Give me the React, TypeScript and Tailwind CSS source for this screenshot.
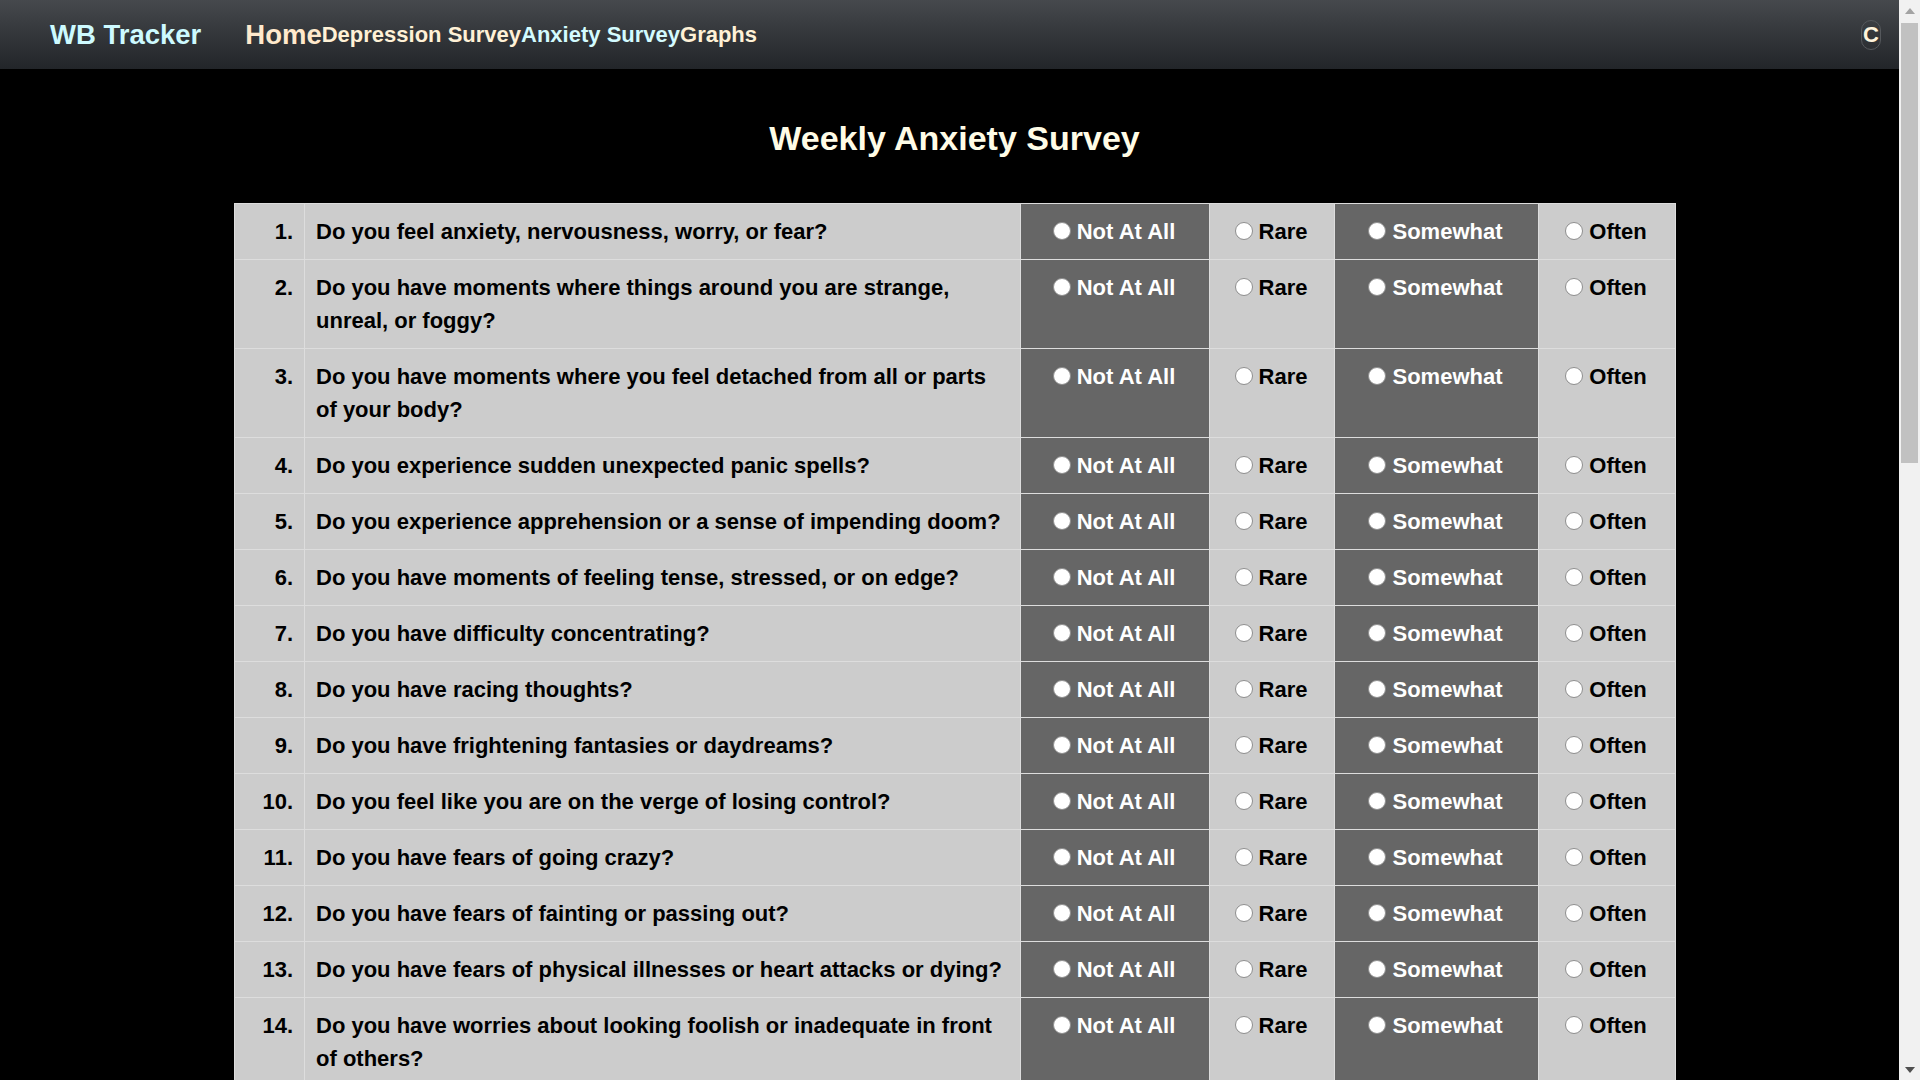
import React from "react";

// --- questions of the weekly survey ---
const questions: string[] = [
  "Do you feel anxiety, nervousness, worry, or fear?",
  "Do you have moments where things around you are strange, unreal, or foggy?",
  "Do you have moments where you feel detached from all or parts of your body?",
  "Do you experience sudden unexpected panic spells?",
  "Do you experience apprehension or a sense of impending doom?",
  "Do you have moments of feeling tense, stressed, or on edge?",
  "Do you have difficulty concentrating?",
  "Do you have racing thoughts?",
  "Do you have frightening fantasies or daydreams?",
  "Do you feel like you are on the verge of losing control?",
  "Do you have fears of going crazy?",
  "Do you have fears of fainting or passing out?",
  "Do you have fears of physical illnesses or heart attacks or dying?",
  "Do you have worries about looking foolish or inadequate in front of others?",
  "Do you have fears of being alone, isolated, or abandoned?",
  "Do you have fears of criticism or disapproval?",
  "Do you have fears that something terrible is about to happen?",
  "Do you have a racing, skipping, or pounding heart?",
  "Do you have pain, pressure, or tightness in your chest?",
  "Do you have tingling or numbness in your toes or fingers?",
  "Do you have butterflies or discomfort in your stomach?",
  "Do you have constipation or diarrhea?",
  "Do you feel restless or jumpy?",
  "Do you have tight, tense muscles?",
  "Do you sweat when it is not hot?",
  "Do you have a lump in your throat?",
  "Do you tremble or shake?",
  "Do you have rubbery or jelly legs?",
  "Do you feel dizzy, lightheaded, or off balance?",
];

const options = [
  { label: "Not At All", dark: true },
  { label: "Rare", dark: false },
  { label: "Somewhat", dark: true },
  { label: "Often", dark: false },
];

const NavBar = () => (
  <header className="flex h-[69px] items-center bg-gradient-to-b from-[#46494d] to-[#222529] pl-[50px] pr-[18px]">
    <span className="text-[27.5px] font-bold text-[#cdfaff]">WB Tracker</span>
    <nav className="ml-[44px] flex items-center">
      <a className="text-[27.5px] font-bold text-[#ffe9cc]">Home</a>
      <a className="text-[22px] font-bold text-[#fff1d6]">Depression Survey</a>
      <a className="text-[22px] font-bold text-[#d3fbff]">Anxiety Survey</a>
      <a className="text-[22px] font-bold text-[#fff1d6]">Graphs</a>
    </nav>
    <button className="ml-auto flex h-[30px] w-[20px] items-center justify-center rounded-full border border-[#55585c] text-[22px] font-bold text-[#fff4dc]">
      C
    </button>
  </header>
);

const QuestionRow = ({ num, text }: { num: number; text: string }) => (
  <tr>
    <td className="border border-[#dddddd] bg-[#cccccc] py-[11px] pr-[11px] text-right align-top text-black">
      {num}.
    </td>
    <td className="border border-[#dddddd] bg-[#cccccc] px-[11px] py-[11px] align-top text-black">
      {text}
    </td>
    {options.map((o) => (
      <td
        key={o.label}
        className={`border border-[#dddddd] py-[11px] align-top ${o.dark ? "bg-[#666666] text-white" : "bg-[#cccccc] text-black"}`}
      >
        <label className="flex h-[33px] items-center justify-center gap-[6px] pr-[2px]">
          <input
            type="radio"
            name={`q${num}`}
            className="mb-[2px] h-[18px] w-[18px] shrink-0 appearance-none rounded-full border border-[#8e8e8e] bg-white"
          />
          {o.label}
        </label>
      </td>
    ))}
  </tr>
);

// classic scrollbar drawn at the right edge
const ScrollBar = () => (
  <div className="flex w-[21px] shrink-0 flex-col bg-[#f1f1f1]">
    <div className="flex h-[21px] items-center justify-center">
      <svg width="10" height="6" viewBox="0 0 10 6">
        <path d="M0 6 L5 0 L10 6 Z" fill="#a3a3a3" />
      </svg>
    </div>
    <div className="flex-1 px-[2px] pt-[2px]">
      <div className="h-[440px] bg-[#c1c1c1]" />
    </div>
    <div className="flex h-[21px] items-center justify-center">
      <svg width="10" height="6" viewBox="0 0 10 6">
        <path d="M0 0 L10 0 L5 6 Z" fill="#505050" />
      </svg>
    </div>
  </div>
);

export default function App() {
  return (
    <div className="flex h-screen overflow-hidden bg-black font-['Liberation_Sans',Arial,sans-serif]">
      <div className="h-full flex-1 overflow-y-auto">
        <NavBar />
        <main className="ml-[234px] w-[1441px] pb-[60px]">
          <h1 className="pt-[44px] pb-[40px] text-center text-[34px] leading-[50px] font-bold text-[#fffce6]">
            Weekly Anxiety Survey
          </h1>
          <table className="w-[1441px] table-fixed border-collapse text-[22px] leading-[33px] font-bold">
            <colgroup>
              <col className="w-[70px]" />
              <col className="w-[716px]" />
              <col className="w-[189px]" />
              <col className="w-[125px]" />
              <col className="w-[204px]" />
              <col className="w-[137px]" />
            </colgroup>
            <tbody>
              {questions.map((q, i) => (
                <QuestionRow key={i} num={i + 1} text={q} />
              ))}
            </tbody>
          </table>
        </main>
      </div>
      <ScrollBar />
    </div>
  );
}
